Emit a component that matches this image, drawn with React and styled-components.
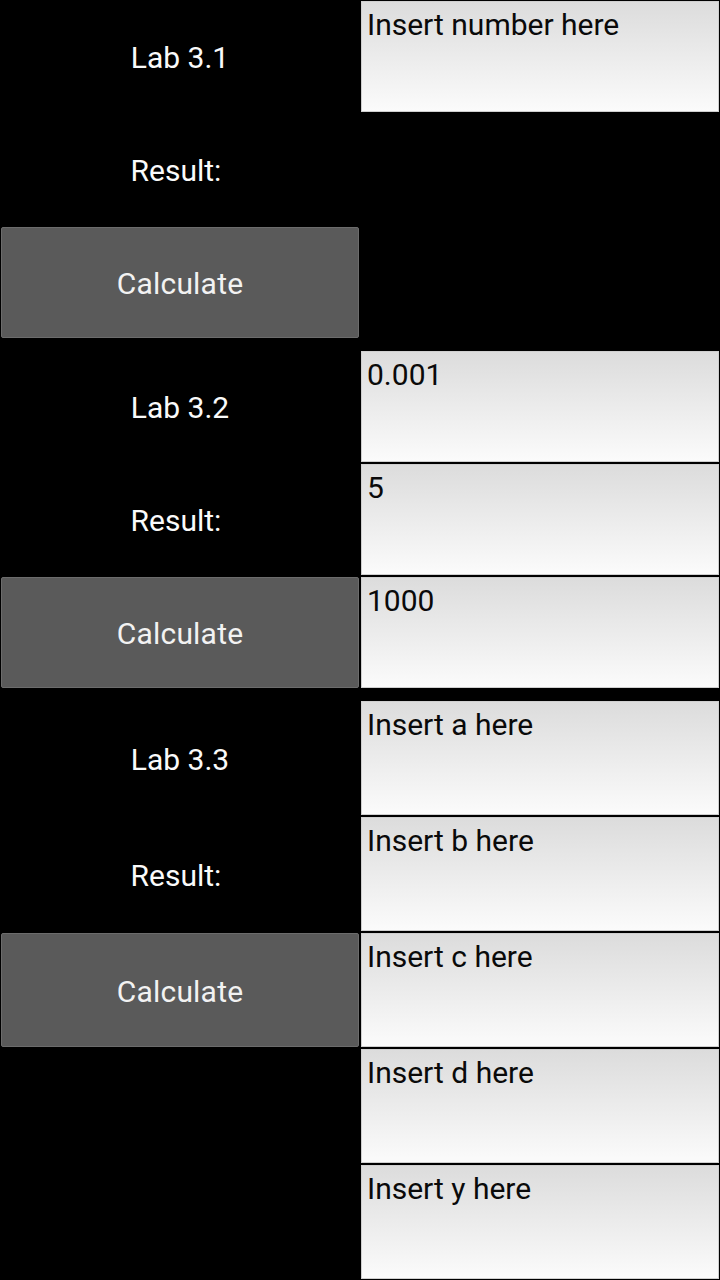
import React from "react";
import styled, { createGlobalStyle } from "styled-components";

const GlobalStyle = createGlobalStyle`
  html, body {
    margin: 0;
    padding: 0;
    background: #000;
  }
  body {
    font-family: Roboto, "Liberation Sans", sans-serif;
  }
`;

const Page = styled.div`
  width: 720px;
  height: 1280px;
  background: #000;
  overflow: hidden;
`;

const Section = styled.section`
  display: grid;
  grid-template-columns: 360px 360px;
  grid-auto-rows: ${(p) => p.$row}px;
  margin-bottom: ${(p) => p.$gap || 0}px;
`;

const Label = styled.div`
  grid-column: 1;
  display: flex;
  align-items: center;
  justify-content: center;
  color: #fafafa;
  font-size: 30px;
  padding-right: ${(p) => (p.$shift ? 8 : 0)}px;
  padding-top: 2px;
`;

const Button = styled.button`
  grid-column: 1;
  margin: 1px;
  background: #5a5a5a;
  border: 1px solid #6c6c6c;
  border-radius: 2px;
  color: #f2f2f2;
  font-family: Roboto, "Liberation Sans", sans-serif;
  font-size: 30px;
  letter-spacing: 0.2px;
  padding: 2px 0 0;
`;

const Field = styled.div`
  grid-column: 2;
  margin: 1px;
  box-sizing: border-box;
  border: 1px solid #cfcfcf;
  background: linear-gradient(#dcdcdc, #fbfbfb);
  color: #0a0a0a;
  font-size: 30px;
  padding: 5px 5px;
  line-height: 35px;
`;

const Empty = styled.div`
  grid-column: ${(p) => p.$col};
`;

export default function App() {
  return (
    <Page>
      <GlobalStyle />
      <Section $row={113} $gap={11}>
        <Label>Lab 3.1</Label>
        <Field>Insert number here</Field>
        <Label $shift>Result:</Label>
        <Empty $col={2} />
        <Button>Calculate</Button>
        <Empty $col={2} />
      </Section>
      <Section $row={113} $gap={11}>
        <Label>Lab 3.2</Label>
        <Field>0.001</Field>
        <Label $shift>Result:</Label>
        <Field>5</Field>
        <Button>Calculate</Button>
        <Field>1000</Field>
      </Section>
      <Section $row={116}>
        <Label>Lab 3.3</Label>
        <Field>Insert a here</Field>
        <Label $shift>Result:</Label>
        <Field>Insert b here</Field>
        <Button>Calculate</Button>
        <Field>Insert c here</Field>
        <Empty $col={1} />
        <Field>Insert d here</Field>
        <Empty $col={1} />
        <Field>Insert y here</Field>
      </Section>
    </Page>
  );
}
